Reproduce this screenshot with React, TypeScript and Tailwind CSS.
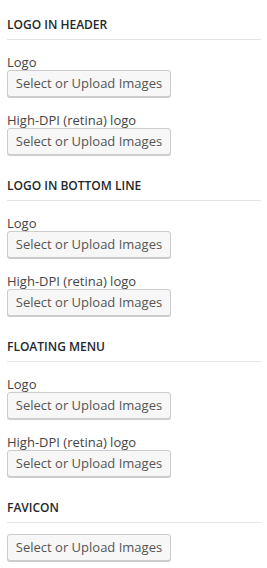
import React from "react";

type Section = {
  title: string;
  fields: string[];
};

const SECTIONS: Section[] = [
  { title: "LOGO IN HEADER", fields: ["Logo", "High-DPI (retina) logo"] },
  { title: "LOGO IN BOTTOM LINE", fields: ["Logo", "High-DPI (retina) logo"] },
  { title: "FLOATING MENU", fields: ["Logo", "High-DPI (retina) logo"] },
  { title: "FAVICON", fields: [""] },
];

function UploadButton() {
  return (
    <button
      type="button"
      className="w-[164px] h-[27px] rounded-[3px] border border-[#cccccc] bg-[#f7f7f7] text-[#555555] text-[13px] leading-[25px] text-center shadow-[0_1px_0_#cccccc] whitespace-nowrap"
    >
      Select or Upload Images
    </button>
  );
}

export default function App() {
  return (
    <div
      className="w-[267px] min-h-[568px] bg-white pl-[7px] pr-[6px] pt-[17px]"
      style={{ fontFamily: '"Open Sans", sans-serif' }}
    >
      {SECTIONS.map((section, i) => (
        <section key={section.title} className={i === 0 ? "" : "mt-[23px]"}>
          {/* Section heading */}
          <h3 className="text-[12px] leading-4 font-semibold text-[#23282d] pb-[6px] border-b border-[#e5e5e5]">
            {section.title}
          </h3>

          {section.fields.map((label, j) =>
            label ? (
              <div key={j} className={j === 0 ? "mt-[14px]" : "mt-[15px]"}>
                <div className="text-[13px] leading-4 text-[#444444]">{label}</div>
                <UploadButton />
              </div>
            ) : (
              <div key={j} className="mt-[11px]">
                <UploadButton />
              </div>
            ),
          )}
        </section>
      ))}
    </div>
  );
}
